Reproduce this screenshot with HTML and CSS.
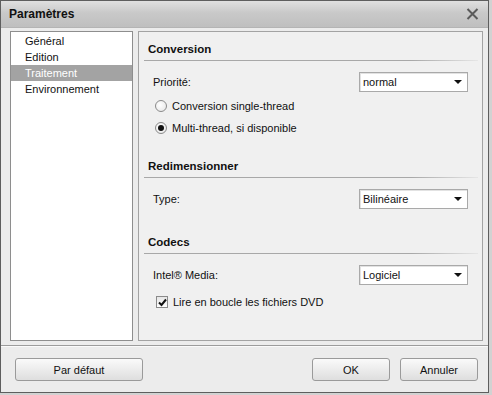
FILE: index.html
```html
<!DOCTYPE html>
<html lang="fr">
<head>
  <meta charset="UTF-8">
  <title>Paramètres</title>
  <link rel="stylesheet" href="styles.css">
</head>
<body>
  <div class="window">
    <div class="titlebar">
      <span class="title">Paramètres</span>
      <svg class="close" width="13" height="12" viewBox="0 0 13 12">
        <path d="M1.5 1 L11.5 11 M11.5 1 L1.5 11" stroke="#5a5a5a" stroke-width="2" fill="none"/>
      </svg>
    </div>

    <div class="main">
      <ul class="nav">
        <li>Général</li>
        <li>Edition</li>
        <li class="active">Traitement</li>
        <li>Environnement</li>
      </ul>

      <div class="panel">
        <div class="section-title first">Conversion</div>
        <div class="rule"></div>
        <div class="row row-select">
          <span>Priorité:</span>
          <div class="select">normal<i class="arrow"></i></div>
        </div>
        <label class="row option radio-first"><span class="radio"></span>Conversion single-thread</label>
        <label class="row option"><span class="radio checked"></span>Multi-thread, si disponible</label>

        <div class="section-title second">Redimensionner</div>
        <div class="rule"></div>
        <div class="row row-select">
          <span>Type:</span>
          <div class="select">Bilinéaire<i class="arrow"></i></div>
        </div>

        <div class="section-title third">Codecs</div>
        <div class="rule"></div>
        <div class="row row-select">
          <span>Intel® Media:</span>
          <div class="select">Logiciel<i class="arrow"></i></div>
        </div>
        <label class="row option check-row">
          <span class="checkbox">
            <svg width="9" height="9" viewBox="0 0 9 9"><path d="M1 4.5 L3.5 7 L8 1.5" stroke="#111" stroke-width="2" fill="none"/></svg>
          </span>Lire en boucle les fichiers DVD
        </label>
      </div>
    </div>

    <div class="separator"></div>

    <div class="footer">
      <button class="btn btn-wide">Par défaut</button>
      <div class="spacer"></div>
      <button class="btn">OK</button>
      <button class="btn">Annuler</button>
    </div>
  </div>
</body>
</html>
```

FILE: styles.css
```css
* {
  margin: 0;
  padding: 0;
  box-sizing: border-box;
}

body {
  background-color: #d2d2d2;
  font-family: 'Liberation Sans', Arial, sans-serif;
  font-size: 11px;
  color: #111;
}

.window {
  width: 489px;
  height: 393px;
  border: 1px solid #5e5e5e;
  background-color: #ececec;
  display: flex;
  flex-direction: column;
}

.titlebar {
  height: 27px;
  display: flex;
  align-items: center;
  justify-content: space-between;
  padding: 0 9px 1px 8px;
  background: linear-gradient(#e0e0e0, #c9c9c9 45%, #bfbfbf);
  border-bottom: 1px solid #b4b4b4;
}

.title {
  font-weight: bold;
  font-size: 12px;
  color: #111;
}

.main {
  display: flex;
  gap: 5px;
  height: 313px;
  padding: 3px 5px 0 9px;
}

.nav {
  list-style: none;
  width: 123px;
  border: 1px solid #8e8e8e;
  background-color: #fff;
  padding-top: 1px;
}

.nav li {
  height: 16px;
  line-height: 16px;
  padding-left: 14px;
}

.nav li.active {
  background-color: #a3a3a3;
  color: #fff;
}

.panel {
  flex: 1;
  border: 1px solid #a3a3a3;
  background-color: #f0f0f0;
  display: flex;
  flex-direction: column;
}

.section-title {
  height: 22px;
  line-height: 22px;
  padding-left: 9px;
  font-weight: bold;
  font-size: 11.5px;
}

.section-title.first { margin-top: 6px; }
.section-title.second { margin-top: 16px; }
.section-title.third { margin-top: 22px; }

.rule {
  height: 1px;
  margin: 0 4px 0 5px;
  background: linear-gradient(to right, #a8a8a8, #a8a8a8 80%, #e6e6e6);
}

.row {
  display: flex;
  align-items: center;
  padding: 0 14px;
}

.row-select {
  height: 20px;
  margin-top: 11px;
  justify-content: space-between;
}

.option {
  height: 22px;
  padding-left: 16px;
}

.radio-first { margin-top: 3px; }
.check-row { margin-top: 6px; }

.select {
  width: 109px;
  height: 20px;
  border: 1px solid #a9a9a9;
  background-color: #fff;
  padding-left: 3px;
  display: flex;
  align-items: center;
  justify-content: space-between;
  box-shadow: inset 1px 1px 0 #e2e2e2;
}

.arrow {
  width: 0;
  height: 0;
  margin-right: 5px;
  border-left: 4px solid transparent;
  border-right: 4px solid transparent;
  border-top: 4px solid #111;
}

.radio {
  width: 12px;
  height: 12px;
  border: 1px solid #8a8a8a;
  border-radius: 50%;
  background: radial-gradient(circle at 40% 40%, #fff, #e4e4e4);
  margin-right: 5px;
  display: flex;
  align-items: center;
  justify-content: center;
}

.radio.checked::after {
  content: "";
  width: 6px;
  height: 6px;
  border-radius: 50%;
  background-color: #111;
}

.checkbox {
  width: 12px;
  height: 12px;
  border: 1px solid #8a8a8a;
  background: linear-gradient(#e6e6e6, #fff);
  margin: 0 5px 0 1px;
  display: flex;
  align-items: center;
  justify-content: center;
}

.separator {
  margin-top: 4px;
  height: 2px;
  border-top: 1px solid #9c9c9c;
  border-bottom: 1px solid #fafafa;
}

.footer {
  display: flex;
  gap: 10px;
  padding: 11px 10px 0 14px;
}

.spacer {
  flex: 1;
}

.btn {
  width: 78px;
  height: 23px;
  border: 1px solid #9a9a9a;
  border-radius: 3px;
  background: linear-gradient(#fafafa, #ececec 50%, #dedede);
  font-family: inherit;
  font-size: 11px;
  color: #111;
}

.btn-wide {
  width: 128px;
}
```
